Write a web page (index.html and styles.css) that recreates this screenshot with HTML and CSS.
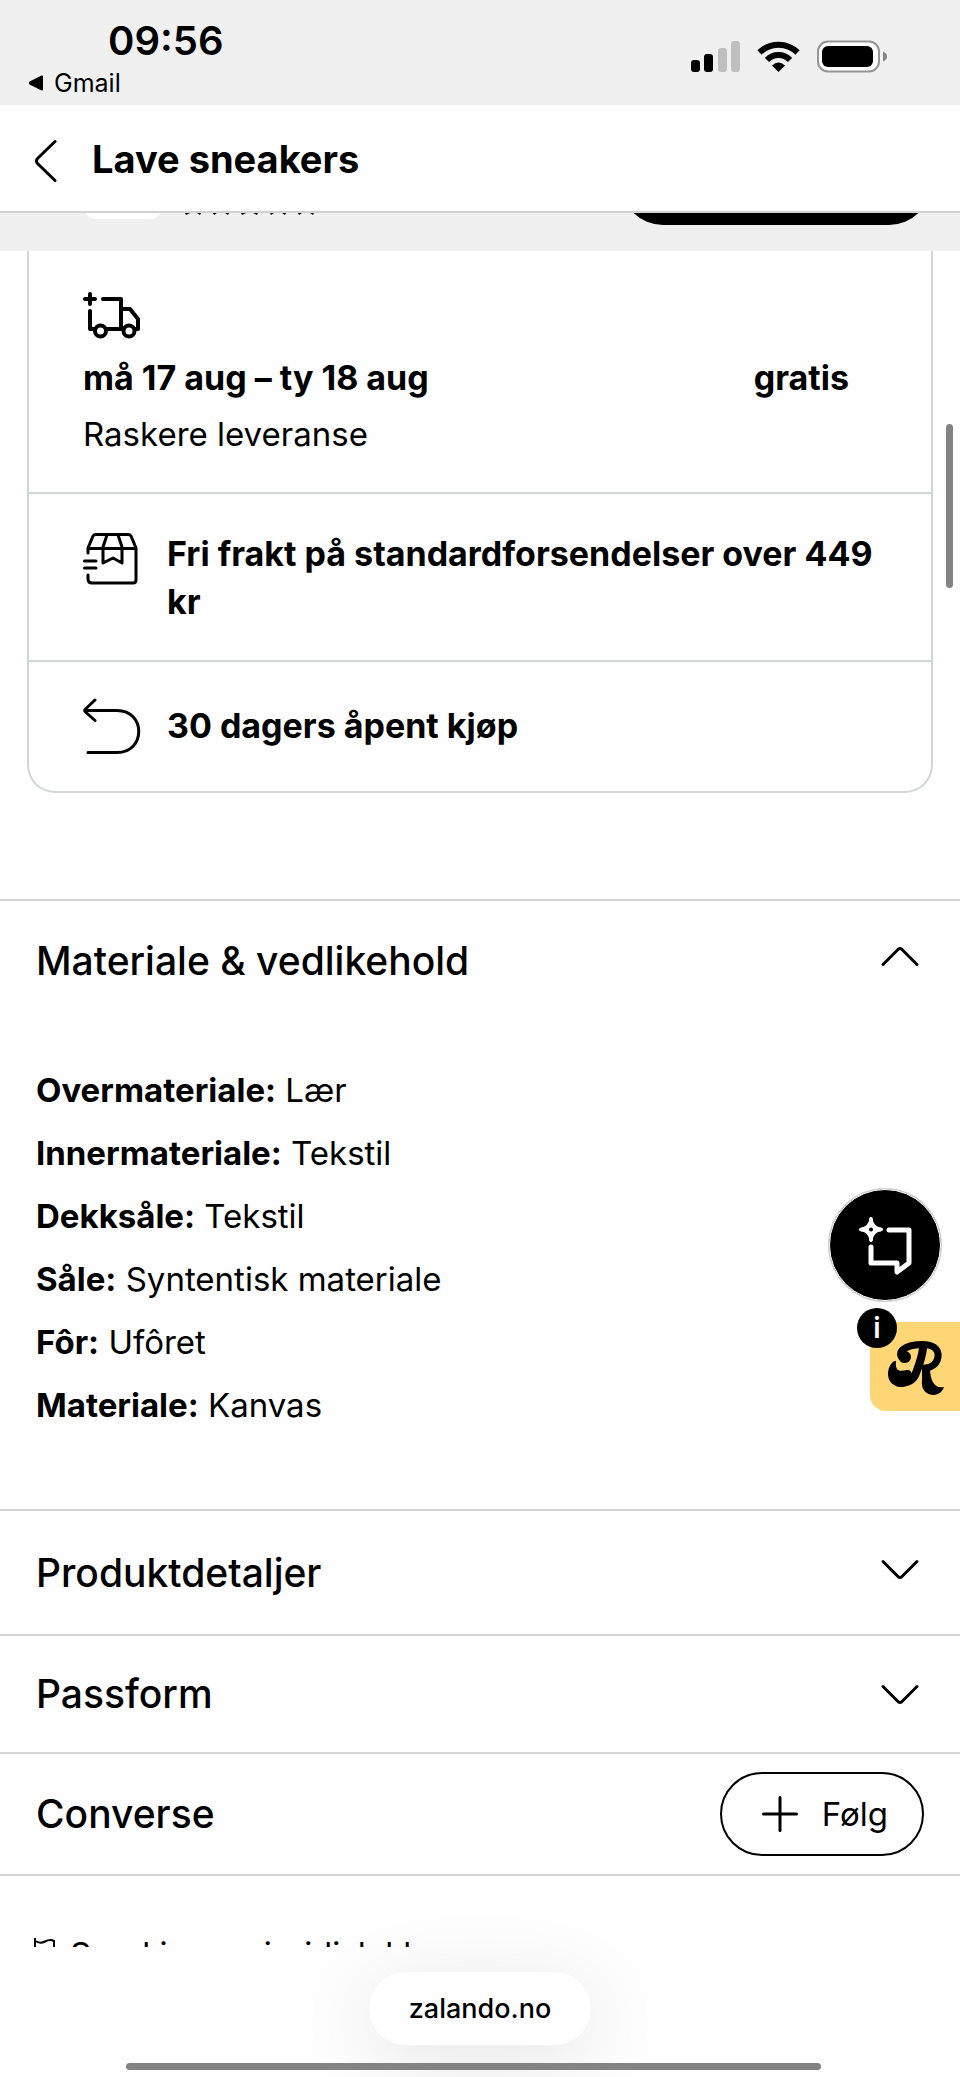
FILE: index.html
```html
<!DOCTYPE html>
<html lang="no">
<head>
<meta charset="utf-8">
<meta name="viewport" content="width=device-width, initial-scale=1">
<title>Lave sneakers</title>
<link rel="stylesheet" href="styles.css">
</head>
<body>
<div class="page">
  <div class="status">
    <div class="status-left">
      <div class="clock">09:56</div>
      <a class="back-app" href="#">
        <svg width="16" height="16" viewBox="0 0 16 16"><path d="M2 7.400 14 1.500V14.500L2 8.600Z" stroke="#000" stroke-width="2" stroke-linejoin="round"/></svg>
        Gmail
      </a>
    </div>
    <svg class="status-icons" width="198" height="34" viewBox="0 0 198 34">
      <rect x="1" y="20" width="9" height="12" rx="3"/>
      <rect x="14" y="14" width="9" height="18" rx="3"/>
      <g fill="#bfbfbf"><rect x="28" y="8" width="9" height="24" rx="3"/><rect x="41" y="1" width="9" height="31" rx="3"/></g>
      <g fill="none" stroke="#000" stroke-width="6"><path d="M69.500 12.500a27 27 0 0 1 38 0"/><path d="M77 20a16 16 0 0 1 23 0"/></g>
      <path d="M88.500 32 82 25.500q6.500-6 13 0Z"/>
      <rect x="128" y="1.500" width="61" height="30" rx="10" fill="#fff" stroke="#959595" stroke-width="2"/>
      <rect x="132" y="6" width="51" height="21" rx="6"/>
      <path d="M193 11.500q4 1.500 4 5t-4 5Z" fill="#858585"/>
    </svg>
  </div>

  <header class="topbar">
    <button class="icon-button" aria-label="Tilbake">
      <svg width="24" height="44" viewBox="0 0 24 44" fill="none" stroke="#000" stroke-width="3" stroke-linecap="round" stroke-linejoin="round"><path d="M21 2.500 3.500 19.500Q1.500 22 3.500 24.500L21 41.500"/></svg>
    </button>
    <h1 class="title">Lave sneakers</h1>
  </header>

  <div class="strip">
    <span class="strip-thumb"></span>
    <svg class="strip-stars" width="220" height="3" viewBox="0 0 220 3"><path d="M1 0h5L2 2ZM13 0h4l-1 2ZM29 0h4l-3 2ZM41 0h4l-1 2ZM57 0h5l-4 2ZM69 0h5l-1 2ZM86 0h4l-3 2ZM98 0h4l-1 2ZM114 0h4l-3 2ZM126 0h4l-1 2Z"/></svg>
    <span class="strip-button"></span>
  </div>

  <main>
    <section class="card">
      <div class="card-row delivery">
        <svg class="truck" width="58" height="48" viewBox="0 0 58 48" fill="none" stroke="#000" stroke-width="4" stroke-linecap="round" stroke-linejoin="round">
          <path d="M2 8H12M7 3V13M20 8H38V38M7 20V38H11M24 38H39M38 18H47L55 28V38H52"/>
          <circle cx="17.500" cy="40" r="5.500"/><circle cx="46" cy="40" r="5.500"/>
        </svg>
        <div class="delivery-line"><strong>må 17 aug – ty 18 aug</strong><strong class="price">gratis</strong></div>
        <div class="delivery-note">Raskere leveranse</div>
      </div>
      <div class="card-row perk">
        <svg width="56" height="56" viewBox="0 0 56 56" fill="none" stroke="#000" stroke-width="3" stroke-linecap="round" stroke-linejoin="round">
          <path d="M5 23V18L10 6Q11 4.500 13 4.500H45Q47 4.500 48 6L53 18V50Q53 53 50 53H9Q5 53 5 49V45M5 18.500H53M24 5 20 17V33L30 28 39 33V17L35 5"/>
          <path d="M1.500 31H13M1.500 38H13"/>
        </svg>
        <strong>Fri frakt på standardforsendelser over 449 kr</strong>
      </div>
      <div class="card-row perk perk-return">
        <svg width="58" height="56" viewBox="0 0 58 56" fill="none" stroke="#000" stroke-width="3" stroke-linecap="round" stroke-linejoin="round"><path d="M12 2 2.500 11Q1 12.500 2.500 14L12 22.500M2 12.500H34C63 12.500 63 54.500 34 54.500H5"/></svg>
        <strong>30 dagers åpent kjøp</strong>
      </div>
    </section>

    <section class="panel">
      <button class="panel-head panel-open" aria-expanded="true">
        <span>Materiale &amp; vedlikehold</span>
        <svg class="chevron chevron-high" width="40" height="22" viewBox="0 0 40 22"><path d="M3 18.500 18.500 3Q20 2 21.500 3L37 18.500"/></svg>
      </button>
      <dl class="specs">
        <div><dt>Overmateriale:</dt> <dd>Lær</dd></div>
        <div><dt>Innermateriale:</dt> <dd>Tekstil</dd></div>
        <div><dt>Dekksåle:</dt> <dd>Tekstil</dd></div>
        <div><dt>Såle:</dt> <dd>Syntentisk materiale</dd></div>
        <div><dt>Fôr:</dt> <dd>Ufôret</dd></div>
        <div><dt>Materiale:</dt> <dd>Kanvas</dd></div>
      </dl>
      <button class="assistant" aria-label="Assistent">
        <svg width="56" height="62" viewBox="0 0 56 62" fill="none" stroke="#fff" stroke-width="5" stroke-linecap="round" stroke-linejoin="round">
          <path d="M32 16H52V49L40 58V49H14V33"/>
          <path fill="#fff" stroke-width="3" d="M14 4.500Q15 14 24.500 15.500 15 17 14 26.500 13 17 3.500 15.500 13 14 14 4.500Z"/>
          <path stroke-width="4" d="M14 5.500V10M14 21V25.500M4.500 15.500H9M19 15.500H23.500"/>
          <circle cx="14" cy="15.500" r="2" fill="#000" stroke="none"/>
        </svg>
      </button>
      <a class="brand-tab" href="#" aria-label="Merke">
        <span class="brand-info">i</span>
        <svg width="58" height="56" viewBox="0 0 58 56" fill="none" stroke="#000" stroke-linecap="round" stroke-linejoin="round">
          <path stroke-width="7" d="M16 19C9 12 18 5 34 4.500C46 4 52 9 51 17C50 24 44 28 38 28"/>
          <path stroke-width="8" d="M36 8C35 18 32 25 29 33C26 41 20 43 12 43"/>
          <path d="M1 34C1 26 6 20 9 21C8 31 12 32 20 30C26 29 26 38 21 43C14 50 1 46 1 34ZM35 30 43 28C43 41 48 49 57 47C55 53 50 55 46 55C38 54 34 49 35 40Z" fill="#000" stroke="none"/>
          <circle cx="18" cy="17" r="6" fill="#000" stroke="none"/>
        </svg>
      </a>
    </section>

    <section class="panel">
      <button class="panel-head panel-details" aria-expanded="false">
        <span>Produktdetaljer</span>
        <svg class="chevron chevron-high" width="40" height="22" viewBox="0 0 40 22"><path d="M3 3.500 18.500 19Q20 20 21.500 19L37 3.500"/></svg>
      </button>
    </section>
    <section class="panel">
      <button class="panel-head panel-fit" aria-expanded="false">
        <span>Passform</span>
        <svg class="chevron" width="40" height="22" viewBox="0 0 40 22"><path d="M3 3.500 18.500 19Q20 20 21.500 19L37 3.500"/></svg>
      </button>
    </section>
    <section class="panel panel-brand">
      <h2 class="panel-title">Converse</h2>
      <button class="follow">
        <svg width="36" height="36" viewBox="0 0 36 36" stroke="#000" stroke-width="3" stroke-linecap="round"><path d="M18 1.500V34.500M1.500 18H34.500"/></svg>
        Følg
      </button>
    </section>
    <div class="report">
      <a class="report-link" href="#">
        <svg width="22" height="28" viewBox="0 0 22 28" fill="none" stroke="#000" stroke-width="2"><path d="M1 2V28M1 5Q6 8 11 5.500T20 5V18Q15 16 10 18.500T1 18"/></svg>
        Send inn en juridisk klage
      </a>
    </div>
  </main>

  <footer class="browser-bar">
    <button class="address">zalando.no</button>
    <span class="home-bar"></span>
  </footer>
  <span class="scrollbar"></span>
</div>
</body>
</html>
```
FILE: styles.css
```css
* { box-sizing: border-box; }

body {
  margin: 0;
  background: #fefefe;
  color: #000;
  font-family: Inter, "Liberation Sans", sans-serif;
  font-size: 33px;
  line-height: 48px;
}

button {
  border: 0;
  padding: 0;
  background: none;
  color: inherit;
  font: inherit;
}

a { color: inherit; text-decoration: none; }
svg { display: block; flex: none; }
strong { font-weight: 700; }

.page { position: relative; overflow: hidden; }

.status {
  display: flex;
  justify-content: space-between;
  align-items: flex-start;
  padding: 17px 72px 0 28px;
  height: 105px;
  background: #f0f0f0;
}

.clock {
  padding-left: 80px;
  font-size: 40px;
  font-weight: 600;
}

.back-app {
  display: flex;
  align-items: center;
  gap: 10px;
  font-size: 25px;
  line-height: 36px;
}

.status-icons { margin-top: 23px; }

.topbar {
  display: flex;
  align-items: center;
  gap: 34px;
  padding: 2px 34px 0;
  height: 108px;
  border-bottom: 2px solid #d1d2d1;
  background: #fff;
}

.icon-button { padding-top: 4px; }

.title {
  margin: 0;
  font-size: 38px;
  font-weight: 700;
}

/* Lower edge of the content that has scrolled under the header. */
.strip {
  display: flex;
  align-items: flex-start;
  padding: 0 29px 0 84px;
  height: 38px;
  overflow: hidden;
  background: #f0f0f0;
}

.strip-thumb {
  width: 78px;
  height: 30px;
  margin-top: -24px;
  border-radius: 12px;
  background: #fff;
}

.strip-stars { margin-left: 22px; }

.strip-button {
  width: 310px;
  height: 84px;
  margin: -72px 0 0 auto;
  border-radius: 42px;
  background: #000;
}

.card {
  margin: 0 27px 106px;
  border: 2px solid #d3d6d6;
  border-top: 0;
  border-radius: 0 0 28px 28px;
}

.card-row { padding: 36px 54px 34px; }
.card-row + .card-row { border-top: 2px solid #d3d6d6; }
.card-row strong { font-size: 34px; }

.delivery {
  display: flex;
  flex-direction: column;
  gap: 8px;
  padding-top: 40px;
}

.truck { margin-bottom: 7px; }

.delivery-line { display: flex; justify-content: space-between; }
.price { padding-right: 28px; }

.perk { display: flex; gap: 28px; padding-right: 48px; }
.perk-return { align-items: center; gap: 26px; padding-bottom: 37px; }

.panel {
  position: relative;
  border-top: 2px solid #d3d5d5;
}

.panel-head,
.panel-brand {
  display: flex;
  align-items: center;
  justify-content: space-between;
  width: 100%;
  padding: 0 40px 0 36px;
  font-size: 39px;
  font-weight: 500;
  text-align: left;
}

.panel-open { height: 120px; }
.panel-details { height: 123px; }
.panel-fit { height: 116px; }

.panel-brand {
  height: 124px;
  padding-right: 36px;
  border-bottom: 2px solid #d3d5d5;
}

.panel-title {
  margin: 0;
  font: inherit;
}

.chevron {
  fill: none;
  stroke: #000;
  stroke-width: 3;
  stroke-linecap: round;
  stroke-linejoin: round;
}

.chevron-high { margin-bottom: 8px; }

.specs {
  margin: 0;
  padding: 38px 36px 72px;
  line-height: 63px;
}

.specs dt { display: inline; font-weight: 700; }
.specs dd { display: inline; margin: 0; }

.assistant {
  position: absolute;
  top: 288px;
  right: 19px;
  display: grid;
  place-items: center;
  width: 112px;
  height: 112px;
  border: 1px solid #fff;
  border-radius: 50%;
  background: #000;
  box-shadow: 0 0 0 1px #ccc;
}

.brand-tab {
  position: absolute;
  top: 421px;
  right: 0;
  width: 90px;
  height: 89px;
  padding: 18px 0 0 17px;
  border-radius: 0 0 0 16px;
  background: #fed675;
}

.brand-info {
  position: absolute;
  top: -14px;
  left: -13px;
  width: 40px;
  border-radius: 50%;
  background: #000;
  color: #fff;
  font-size: 28px;
  font-weight: 600;
  line-height: 40px;
  text-align: center;
}

.follow {
  display: flex;
  align-items: center;
  gap: 24px;
  height: 84px;
  padding: 0 34px 0 40px;
  border: 2px solid #000;
  border-radius: 42px;
  font-size: 33px;
  font-weight: 400;
}

.report {
  height: 71px;
  padding: 60px 34px 0;
  overflow: hidden;
}

.report-link {
  display: flex;
  gap: 14px;
  line-height: 36px;
}

.browser-bar {
  position: relative;
  display: flex;
  flex-direction: column;
  align-items: center;
  justify-content: space-between;
  height: 130px;
  padding: 25px 126px 7px;
}

.address {
  height: 73px;
  padding: 0 40px;
  border-radius: 37px;
  background: #fff;
  font-size: 27px;
  font-weight: 500;
  box-shadow: 0 14px 80px rgba(0, 0, 0, 0.1);
}

.home-bar {
  align-self: stretch;
  height: 7px;
  margin-right: 13px;
  border-radius: 4px;
  background: #838383;
  z-index: 1;
}

.scrollbar {
  position: absolute;
  top: 424px;
  right: 7px;
  width: 7px;
  height: 164px;
  border-radius: 4px;
  background: #838383;
}
```
